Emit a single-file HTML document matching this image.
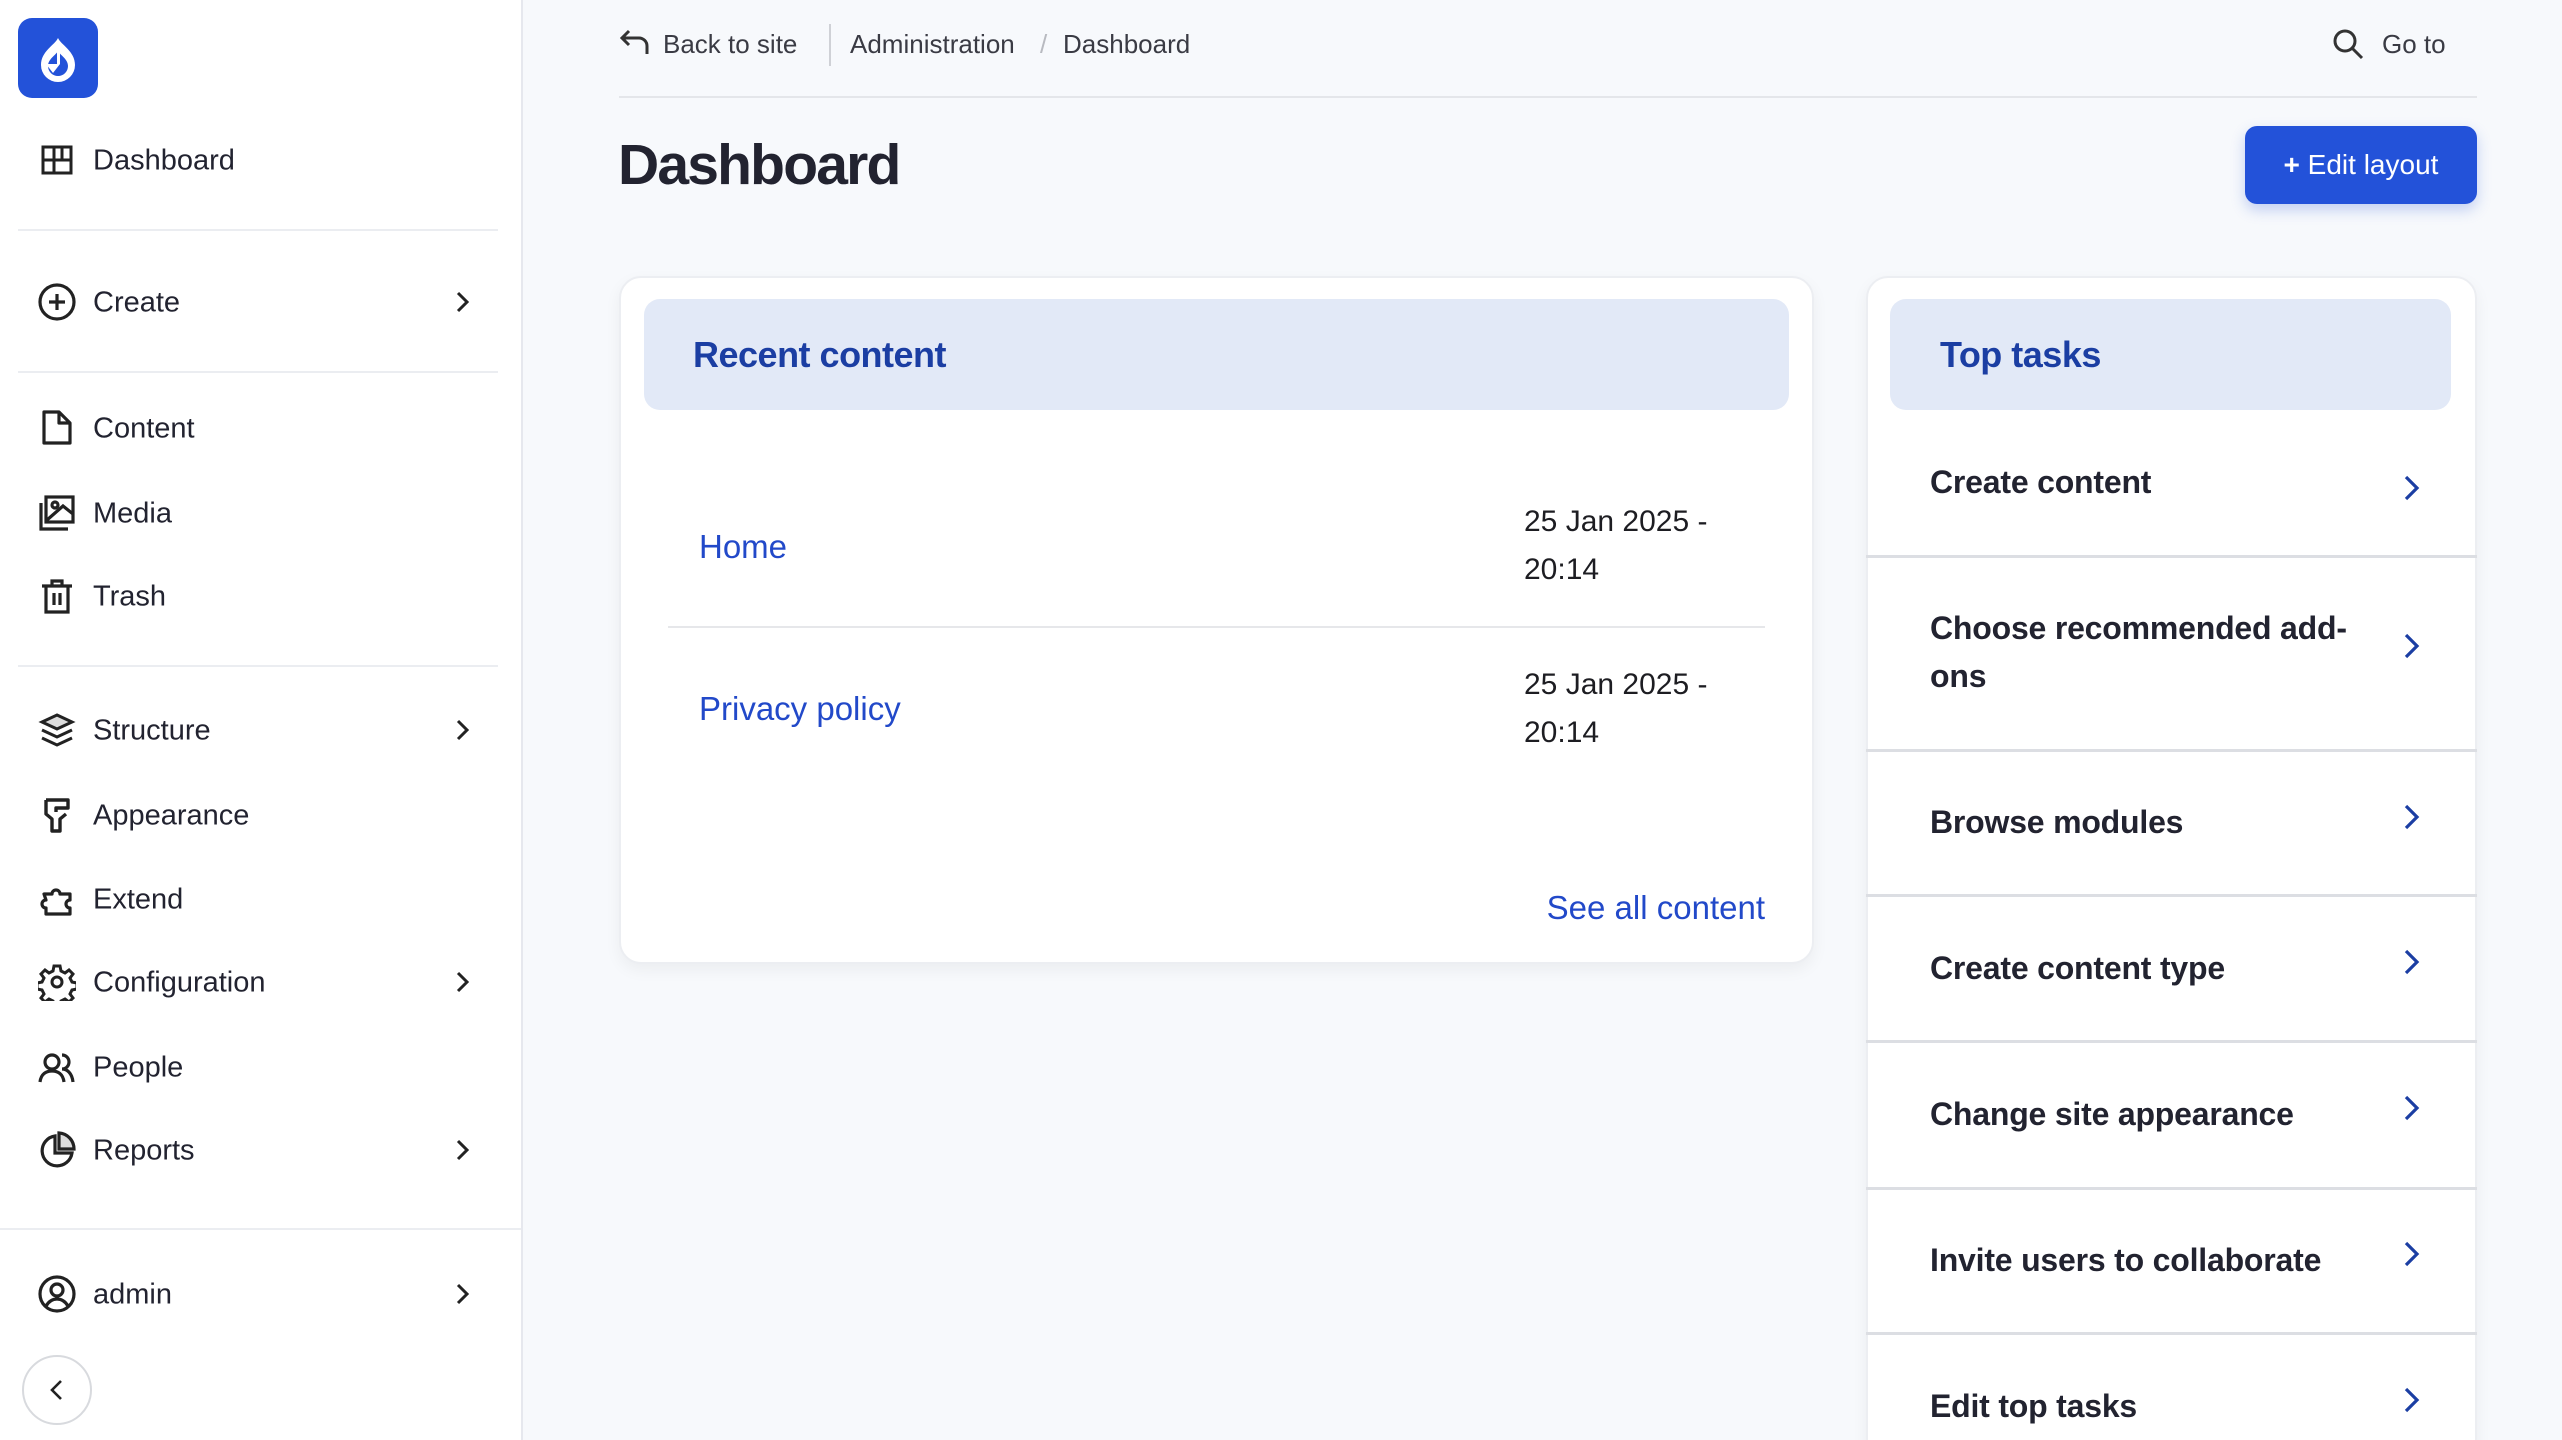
<!DOCTYPE html>
<html><head><meta charset="utf-8"><style>
*{box-sizing:border-box;margin:0;padding:0}
html{width:2562px;height:1440px;overflow:hidden}
body{width:2562px;height:1440px;overflow:hidden;background:#f7f9fc;font-family:"Liberation Sans",sans-serif;color:#222330;position:relative}
.a{position:absolute}
#side{left:0;top:0;width:523px;height:1440px;background:#fff;border-right:2px solid #e6e8ee}
.logo{left:18px;top:18px;width:80px;height:80px;border-radius:14px;background:#2352d9}
.nav{position:absolute;left:93px;font-size:29px;color:#222330;line-height:1;transform:translateY(-50%)}
.ic{position:absolute;left:38px;width:38px;height:38px;transform:translateY(-50%)}
.chev{position:absolute;left:450px;width:24px;height:24px;transform:translateY(-50%)}
.hr{position:absolute;left:18px;width:480px;height:2px;background:#ebedf1}
.card{background:#fff;border:2px solid #eceef2;border-radius:22px;box-shadow:0 6px 16px rgba(0,0,0,.05)}
.head{background:#e2e9f7;border-radius:16px}
.ht{color:#1b3ea3;font-weight:bold;font-size:36px;letter-spacing:-.5px}
.link{color:#2249c9;font-size:33px}
.date{font-size:30px;color:#1d1d22;line-height:48px}
.task{position:absolute;left:1930px;width:450px;font-weight:bold;font-size:32px;color:#222330;line-height:48px;transform:translateY(-50%);letter-spacing:-.2px}
.tsep{position:absolute;left:1866px;width:611px;height:3px;background:#dcdee3}
.tch{position:absolute;left:2398px;width:26px;height:30px;transform:translateY(-50%)}
</style></head><body>
<div id="side" class="a">
  <div class="a logo"><svg width="80" height="80" viewBox="0 0 80 80"><path d="M40 20c-3 7-17 13-17 27a17 17 0 0 0 34 0c0-14-14-20-17-27z" fill="#fff"/><path d="M40 33c-2 4-10 8-10 15a10 10 0 0 0 20 0c0-7-8-11-10-15z" fill="#2352d9"/><path d="M28 46h14l-7 9z" fill="#fff"/><path d="M39 32l3 0 0 14-3 0z" fill="#fff"/><circle cx="41" cy="53" r="3" fill="#2352d9"/></svg></div>

  <svg class="ic" style="top:160px" viewBox="0 0 38 38" fill="none" stroke="#222" stroke-width="3"><rect x="5" y="6" width="28" height="26"/><path d="M5 19h28M16 6v26M24 6v13"/></svg>
  <div class="nav" style="top:161px">Dashboard</div>
  <div class="hr" style="top:229px"></div>

  <svg class="ic" style="top:302px" viewBox="0 0 38 38" fill="none" stroke="#222" stroke-width="3.2"><circle cx="19" cy="19" r="17"/><path d="M19 11v16M11 19h16"/></svg>
  <div class="nav" style="top:303px">Create</div>
  <svg class="chev" style="top:302px" viewBox="0 0 24 24" fill="none" stroke="#222" stroke-width="3"><path d="M8 3l9 9-9 9"/></svg>
  <div class="hr" style="top:371px"></div>

  <svg class="ic" style="top:428px" viewBox="0 0 38 38" fill="none" stroke="#222" stroke-width="3.2" stroke-linejoin="round"><path d="M6 3h15l11 11v20H6z"/><path d="M21 3v11h11"/></svg>
  <div class="nav" style="top:429px">Content</div>
  <svg class="ic" style="top:513px" viewBox="0 0 38 38" fill="none" stroke="#222" stroke-width="3.2"><rect x="8" y="3" width="27" height="25"/><path d="M3 9v26h27"/><circle cx="17" cy="11" r="3"/><path d="M9 26l16-14 10 8"/></svg>
  <div class="nav" style="top:514px">Media</div>
  <svg class="ic" style="top:596px" viewBox="0 0 38 38" fill="none" stroke="#222" stroke-width="3.2"><path d="M4 9h30M14 9V4h10v5M8 9v26h22V9M16 16v12M22 16v12"/></svg>
  <div class="nav" style="top:597px">Trash</div>
  <div class="hr" style="top:665px"></div>

  <svg class="ic" style="top:730px" viewBox="0 0 38 38" fill="none" stroke="#222" stroke-width="3"><path d="M19 4l15 7-15 7-15-7z" fill="#ddd"/><path d="M4 19l15 7 15-7M4 27l15 7 15-7"/></svg>
  <div class="nav" style="top:731px">Structure</div>
  <svg class="chev" style="top:730px" viewBox="0 0 24 24" fill="none" stroke="#222" stroke-width="3"><path d="M8 3l9 9-9 9"/></svg>
  <svg class="ic" style="top:815px" viewBox="0 0 38 38" fill="none" stroke="#222" stroke-width="3.4" stroke-linejoin="round"><path d="M8 4h22v8H18v4M8 4v14l6 5v12h8V23l6-5"/></svg>
  <div class="nav" style="top:816px">Appearance</div>
  <svg class="ic" style="top:899px" viewBox="0 0 38 38" fill="none" stroke="#222" stroke-width="3.2" stroke-linejoin="round"><path d="M6 14h8a4 4 0 1 1 8 0h10v6a4 4 0 1 0 0 8v6H8v-6a4 4 0 1 1 0-8z"/></svg>
  <div class="nav" style="top:900px">Extend</div>
  <svg class="ic" style="top:982px" viewBox="0 0 38 38" fill="none" stroke="#222" stroke-width="3"><circle cx="19" cy="19" r="5"/><path d="M16 3h6l1 5 4 2 4-3 4 4-3 4 2 4 5 1v6l-5 1-2 4 3 4-4 4-4-3-4 2-1 5h-6l-1-5-4-2-4 3-4-4 3-4-2-4-5-1v-6l5-1 2-4-3-4 4-4 4 3 4-2z"/></svg>
  <div class="nav" style="top:983px">Configuration</div>
  <svg class="chev" style="top:982px" viewBox="0 0 24 24" fill="none" stroke="#222" stroke-width="3"><path d="M8 3l9 9-9 9"/></svg>
  <svg class="ic" style="top:1067px" viewBox="0 0 38 38" fill="none" stroke="#222" stroke-width="3.2"><circle cx="14" cy="14" r="7"/><path d="M2 34c1-8 6-11 12-11s11 3 12 11M24 7a7 7 0 0 1 0 14c5 0 10 4 11 13"/></svg>
  <div class="nav" style="top:1068px">People</div>
  <svg class="ic" style="top:1150px" viewBox="0 0 38 38" fill="none" stroke="#222" stroke-width="3.2"><path d="M17 5a15 15 0 1 0 17 17H17z"/><path d="M21 2v16h15A16 16 0 0 0 21 2z" fill="#ddd"/></svg>
  <div class="nav" style="top:1151px">Reports</div>
  <svg class="chev" style="top:1150px" viewBox="0 0 24 24" fill="none" stroke="#222" stroke-width="3"><path d="M8 3l9 9-9 9"/></svg>

  <div class="a" style="left:0;top:1228px;width:521px;height:2px;background:#ebedf1"></div>
  <svg class="ic" style="top:1294px" viewBox="0 0 38 38" fill="none" stroke="#222" stroke-width="3.2"><circle cx="19" cy="19" r="17"/><circle cx="19" cy="15" r="6"/><path d="M8 31c3-5 7-7 11-7s8 2 11 7"/></svg>
  <div class="nav" style="top:1295px">admin</div>
  <svg class="chev" style="top:1294px" viewBox="0 0 24 24" fill="none" stroke="#222" stroke-width="3"><path d="M8 3l9 9-9 9"/></svg>
  <div class="a" style="left:22px;top:1355px;width:70px;height:70px;border:2px solid #d8dade;border-radius:50%"></div>
  <svg class="a" style="left:46px;top:1378px" width="22" height="24" viewBox="0 0 22 24" fill="none" stroke="#222" stroke-width="2.6"><path d="M15 3l-9 9 9 9"/></svg>
</div>

<svg class="a" style="left:619px;top:28px" width="32" height="30" viewBox="0 0 32 30" fill="none" stroke="#333" stroke-width="3"><path d="M10 3L3 10l7 7M3 10h17a8 8 0 0 1 8 8v8"/></svg>
<div class="a" style="left:663px;top:29px;font-size:26px;color:#3a3b44">Back to site</div>
<div class="a" style="left:829px;top:24px;width:2px;height:42px;background:#cfd1d6"></div>
<div class="a" style="left:850px;top:29px;font-size:26px;color:#3a3b44">Administration</div>
<div class="a" style="left:1040px;top:29px;font-size:26px;color:#b8bac0">/</div>
<div class="a" style="left:1063px;top:29px;font-size:26px;color:#3a3b44">Dashboard</div>
<svg class="a" style="left:2332px;top:28px" width="32" height="32" viewBox="0 0 32 32" fill="none" stroke="#333" stroke-width="3"><circle cx="13" cy="13" r="10"/><path d="M20.5 20.5L30 30"/></svg>
<div class="a" style="left:2382px;top:29px;font-size:26px;color:#3a3b44">Go to</div>
<div class="a" style="left:619px;top:96px;width:1858px;height:2px;background:#e4e6ea"></div>

<div class="a" style="left:618px;top:132px;font-size:57px;font-weight:bold;letter-spacing:-1.8px;color:#222330">Dashboard</div>
<div class="a" style="left:2245px;top:126px;width:232px;height:78px;background:#2352d9;border-radius:12px;box-shadow:0 6px 14px rgba(35,82,217,.25);color:#fff;font-size:28px;line-height:78px;text-align:center"><b>+</b> Edit layout</div>

<div class="a card" style="left:619px;top:276px;width:1195px;height:688px"></div>
<div class="a head" style="left:644px;top:299px;width:1145px;height:111px"></div>
<div class="a ht" style="left:693px;top:334px">Recent content</div>
<div class="a link" style="left:699px;top:528px">Home</div>
<div class="a date" style="left:1524px;top:498px">25 Jan 2025 -<br>20:14</div>
<div class="a" style="left:668px;top:626px;width:1097px;height:2px;background:#e6e7ea"></div>
<div class="a link" style="left:699px;top:690px">Privacy policy</div>
<div class="a date" style="left:1524px;top:661px">25 Jan 2025 -<br>20:14</div>
<div class="a link" style="left:500px;top:889px;width:1265px;text-align:right">See all content</div>

<div class="a card" style="left:1866px;top:276px;width:611px;height:1190px"></div>
<div class="a head" style="left:1890px;top:299px;width:561px;height:111px"></div>
<div class="a ht" style="left:1940px;top:334px">Top tasks</div>

<div class="task" style="top:482px">Create content</div>
<svg class="tch" style="top:488px" viewBox="0 0 26 30" fill="none" stroke="#1b3ea3" stroke-width="3.2"><path d="M8 4l11 11-11 11"/></svg>
<div class="tsep" style="top:555px"></div>
<div class="task" style="top:652px">Choose recommended add-ons</div>
<svg class="tch" style="top:646px" viewBox="0 0 26 30" fill="none" stroke="#1b3ea3" stroke-width="3.2"><path d="M8 4l11 11-11 11"/></svg>
<div class="tsep" style="top:749px"></div>
<div class="task" style="top:822px">Browse modules</div>
<svg class="tch" style="top:817px" viewBox="0 0 26 30" fill="none" stroke="#1b3ea3" stroke-width="3.2"><path d="M8 4l11 11-11 11"/></svg>
<div class="tsep" style="top:894px"></div>
<div class="task" style="top:968px">Create content type</div>
<svg class="tch" style="top:962px" viewBox="0 0 26 30" fill="none" stroke="#1b3ea3" stroke-width="3.2"><path d="M8 4l11 11-11 11"/></svg>
<div class="tsep" style="top:1040px"></div>
<div class="task" style="top:1114px">Change site appearance</div>
<svg class="tch" style="top:1108px" viewBox="0 0 26 30" fill="none" stroke="#1b3ea3" stroke-width="3.2"><path d="M8 4l11 11-11 11"/></svg>
<div class="tsep" style="top:1187px"></div>
<div class="task" style="top:1260px">Invite users to collaborate</div>
<svg class="tch" style="top:1254px" viewBox="0 0 26 30" fill="none" stroke="#1b3ea3" stroke-width="3.2"><path d="M8 4l11 11-11 11"/></svg>
<div class="tsep" style="top:1332px"></div>
<div class="task" style="top:1406px">Edit top tasks</div>
<svg class="tch" style="top:1400px" viewBox="0 0 26 30" fill="none" stroke="#1b3ea3" stroke-width="3.2"><path d="M8 4l11 11-11 11"/></svg>
</body></html>
